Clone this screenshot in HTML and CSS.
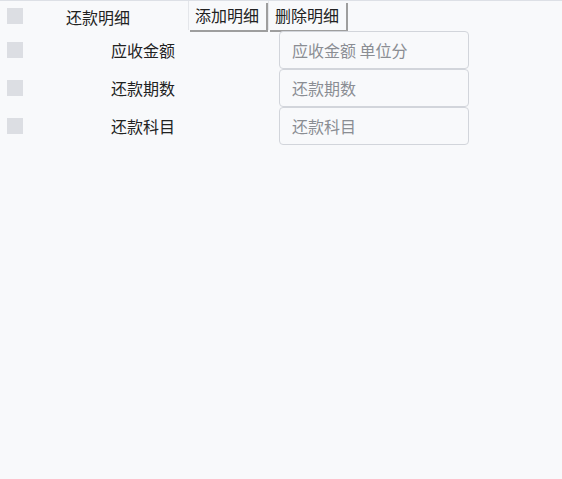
FILE: index.html
```html
<!DOCTYPE html>
<html lang="zh-CN">
<head>
    <meta charset="UTF-8">
    <meta name="viewport" content="width=device-width, initial-scale=1.0">
    <title>还款明细</title>
    <link rel="stylesheet" href="styles.css">
</head>
<body>

    <!-- 还款明细 -->
    <div class="detail">
        <div class="detail-head">
            <span class="check"></span>
            <span class="head-label">还款明细</span>
            <button class="btn">添加明细</button>
            <button class="btn">删除明细</button>
        </div>

        <div class="field">
            <span class="check"></span>
            <label class="field-label">应收金额</label>
            <input type="text" placeholder="应收金额 单位分">
        </div>

        <div class="field">
            <span class="check"></span>
            <label class="field-label">还款期数</label>
            <input type="text" placeholder="还款期数">
        </div>

        <div class="field">
            <span class="check"></span>
            <label class="field-label">还款科目</label>
            <input type="text" placeholder="还款科目">
        </div>
    </div>

</body>
</html>
```

FILE: styles.css
```css
/* General Styles */
* {
    margin: 0;
    padding: 0;
    box-sizing: border-box;
    font-family: "Noto Sans CJK SC", "Noto Sans", sans-serif;
}

body {
    background-color: #f8f9fb;
    border-top: 1px solid #dde0e6;
    height: 100vh;
    color: #222;
    font-size: 16px;
}

.check {
    width: 16px;
    height: 16px;
    background-color: #dcdee3;
    flex-shrink: 0;
}

/* Header row */
.detail-head {
    display: flex;
    align-items: center;
    height: 29px;
    padding-left: 7px;
}

.head-label {
    width: 122px;
    margin-left: 43px;
    line-height: 22px;
    padding-top: 3px;
}

.btn {
    font-size: 16px;
    color: #222;
    background-color: #f8f9fb;
    border: none;
    border-left: 1px solid #e4e6ea;
    height: 29px;
    margin-top: -1px;
    padding: 0 7px 0 6px;
    margin-right: 2px;
    box-shadow: 2px 2px 0 #9e9e9e;
    cursor: pointer;
}

/* Fields */
.field {
    display: flex;
    align-items: center;
    height: 38px;
    padding-left: 7px;
}

.detail-head + .field {
    margin-top: 1px;
}

.field-label {
    width: 168px;
    margin-left: 88px;
}

.field input {
    width: 190px;
    height: 38px;
    border: 1px solid #d2d5db;
    border-radius: 4px;
    background-color: #f8f9fb;
    padding: 0 12px;
    font-size: 16px;
    color: #222;
}

.field input::placeholder {
    color: #8a8d93;
}
```
